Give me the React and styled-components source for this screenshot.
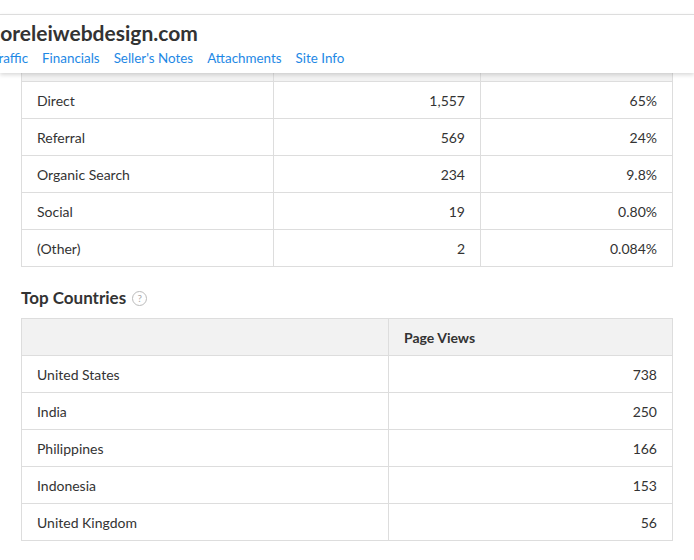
import React from "react";
import styled, { createGlobalStyle } from "styled-components";

const G = createGlobalStyle`
  body { margin: 0; font-family: "Source Sans Pro", Lato, "Noto Sans", sans-serif; color: #333; background: #fff; }
`;
const Page = styled.div`position: relative; width: 694px; height: 560px; overflow: hidden;`;
const Header = styled.div`
  position: absolute; top: 14px; left: 0; right: 0; height: 59px; background: #fff;
  border-top: 1px solid #ddd; box-shadow: 0 2px 4px rgba(0,0,0,0.15); z-index: 2;
  box-sizing: border-box;
`;
const Title = styled.div`font-size: 21px; font-weight: 700; color: #333; margin: 3px 0 0 -5px; line-height: 30px;`;
const Nav = styled.div`display: flex; gap: 14px; margin-left: -8px; margin-top: 2px; font-size: 13.4px;`;
const Link = styled.span`color: #1e88e5;`;
const Content = styled.div`padding: 44px 21px 0 21px;`;
const Table = styled.table`
  width: 652px; border-collapse: collapse; font-size: 14px;
  td, th { border: 1px solid #ddd; height: 36px; padding: 0 15px; }
`;
const Th = styled.th`background: #f2f2f2; text-align: left; font-weight: 700;`;
const Td = styled.td`text-align: ${p => p.$r ? "right" : "left"};`;
const H2 = styled.h2`font-size: 17px; font-weight: 700; margin: 20px 0 9px; display: flex; align-items: center; gap: 6px; line-height: 22px;`;
const Help = styled.span`width: 13px; height: 13px; border: 1px solid #bbb; border-radius: 50%; color: #aaa; font-size: 10px; font-weight: 400; display: inline-flex; align-items: center; justify-content: center;`;

const src = [["Direct","1,557","65%"],["Referral","569","24%"],["Organic Search","234","9.8%"],["Social","19","0.80%"],["(Other)","2","0.084%"]];
const ctry = [["United States","738"],["India","250"],["Philippines","166"],["Indonesia","153"],["United Kingdom","56"]];

export default function App() {
  return (
    <Page>
      <G />
      <Header>
        <Title>loreleiwebdesign.com</Title>
        <Nav>{["Traffic","Financials","Seller's Notes","Attachments","Site Info"].map(n => <Link key={n}>{n}</Link>)}</Nav>
      </Header>
      <Content>
        <Table>
          <colgroup><col style={{width:252}}/><col style={{width:207}}/><col/></colgroup>
          <thead><tr><Th></Th><Th>Visits</Th><Th>%</Th></tr></thead>
          <tbody>{src.map(r => <tr key={r[0]}><Td>{r[0]}</Td><Td $r>{r[1]}</Td><Td $r>{r[2]}</Td></tr>)}</tbody>
        </Table>
        <H2>Top Countries <Help>?</Help></H2>
        <Table>
          <colgroup><col style={{width:367}}/><col/></colgroup>
          <thead><tr><Th></Th><Th>Page Views</Th></tr></thead>
          <tbody>{ctry.map(r => <tr key={r[0]}><Td>{r[0]}</Td><Td $r>{r[1]}</Td></tr>)}</tbody>
        </Table>
      </Content>
    </Page>
  );
}
